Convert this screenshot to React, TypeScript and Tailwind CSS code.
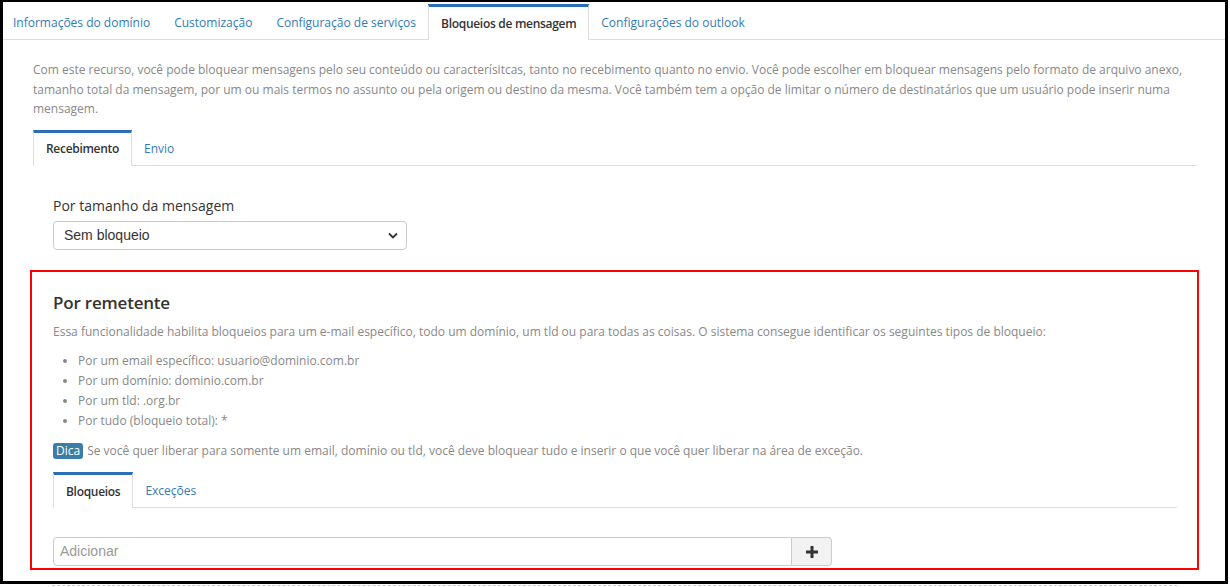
import React from 'react'

const topTabs = [
  'Informações do domínio',
  'Customização',
  'Configuração de serviços',
  'Bloqueios de mensagem',
  'Configurações do outlook'
]

function Tabs({ items, active }: { items: string[]; active: string }) {
  return (
    <div className="flex h-[36px] border-b border-[#ddd]">
      {items.map((t) =>
        t === active ? (
          <div
            key={t}
            className="h-[36px] -mb-px flex items-center px-3 bg-white border-t-[3px] border-t-[#2a6fb5] border-x border-x-[#ddd] text-[12px] font-semibold tracking-[-0.3px] text-[#333]"
          >
            {t}
          </div>
        ) : (
          <div key={t} className="h-[35px] pt-[3px] flex items-center px-3 text-[12px] text-[#337ab7]">
            {t}
          </div>
        )
      )}
    </div>
  )
}

export default function App() {
  return (
    <div className="w-[1230px] h-[587px] bg-white overflow-hidden font-['Open_Sans',sans-serif]">
      <div className="w-[1228px] h-[584px] border-t-2 border-x-[3px] border-b-[3px] border-black overflow-hidden">
        {/* top tabs */}
        <div className="mt-[2px] -ml-[2px]">
          <Tabs items={topTabs} active="Bloqueios de mensagem" />
        </div>

        <div className="pl-[30px] pr-[28px] pt-5">
          <p className="text-[12px] leading-[19.5px] text-[#888]">
            Com este recurso, você pode bloquear mensagens pelo seu conteúdo ou caracterísitcas, tanto no recebimento quanto no envio. Você pode escolher em bloquear mensagens pelo formato de arquivo anexo, tamanho total da mensagem, por um ou mais termos no assunto ou pela origem ou destino da mesma. Você também tem a opção de limitar o número de destinatários que um usuário pode inserir numa mensagem.
          </p>

          <div className="mt-[11px]">
            <Tabs items={['Recebimento', 'Envio']} active="Recebimento" />
          </div>

          <div className="pl-5 pt-[30px]">
            <div className="text-[14px] leading-5 text-[#333]">Por tamanho da mensagem</div>
            <div className="mt-[5px] w-[354px] h-[29px] border border-[#ccc] rounded-[4px] flex items-center justify-between pl-[10px] pr-[8px] font-['Liberation_Sans',Arial,sans-serif] text-[14px] text-[#333]">
              <span>Sem bloqueio</span>
              <svg width="10" height="7" viewBox="0 0 10 7">
                <polyline points="1,1.5 5,5.5 9,1.5" fill="none" stroke="#333" strokeWidth="1.8" />
              </svg>
            </div>
          </div>

          {/* Por remetente */}
          <div className="mt-5 -ml-[3px] -mr-[2px] border-2 border-[#ff0000] pl-[21px] pr-5 pt-[18px] pb-[2px]">
            <h3 className="text-[17px] leading-[25px] font-semibold tracking-[-0.2px] text-[#333]">Por remetente</h3>
            <p className="mt-[7px] text-[12px] leading-[19.5px] text-[#888]">
              Essa funcionalidade habilita bloqueios para um e-mail específico, todo um domínio, um tld ou para todas as coisas. O sistema consegue identificar os seguintes tipos de bloqueio:
            </p>
            <ul className="mt-[10px] pl-[25px] list-disc text-[12px] leading-5 text-[#888]">
              <li>Por um email específico: usuario@dominio.com.br</li>
              <li>Por um domínio: dominio.com.br</li>
              <li>Por um tld: .org.br</li>
              <li>Por tudo (bloqueio total): *</li>
            </ul>
            <div className="mt-[10px] text-[12px] leading-5 text-[#888] flex items-center">
              <span className="inline-block bg-[#3a7ea6] text-white text-[12px] leading-[16px] px-[3px] rounded-[3px] mr-[4px]">Dica</span>
              <span>Se você quer liberar para somente um email, domínio ou tld, você deve bloquear tudo e inserir o que você quer liberar na área de exceção.</span>
            </div>

            <div className="mt-[11px]">
              <Tabs items={['Bloqueios', 'Exceções']} active="Bloqueios" />
            </div>

            <div className="mt-[29px] flex w-[779px] h-[29px]">
              <div className="flex-1 border border-[#ccc] rounded-l-[4px] flex items-center pl-[6px] font-['Liberation_Sans',Arial,sans-serif] text-[14px] text-[#999]">
                Adicionar
              </div>
              <div className="w-[40px] border border-l-0 border-[#ccc] rounded-r-[4px] bg-[#f2f2f2] flex items-center justify-center">
                <svg width="12" height="12" viewBox="0 0 12 12">
                  <rect x="4.5" y="0" width="3" height="12" fill="#333" />
                  <rect x="0" y="4.5" width="12" height="3" fill="#333" />
                </svg>
              </div>
            </div>
          </div>
        </div>
      </div>
      <div className="mt-px ml-[52px] w-[1125px] border-t border-dashed border-[#ccc]" />
    </div>
  )
}
